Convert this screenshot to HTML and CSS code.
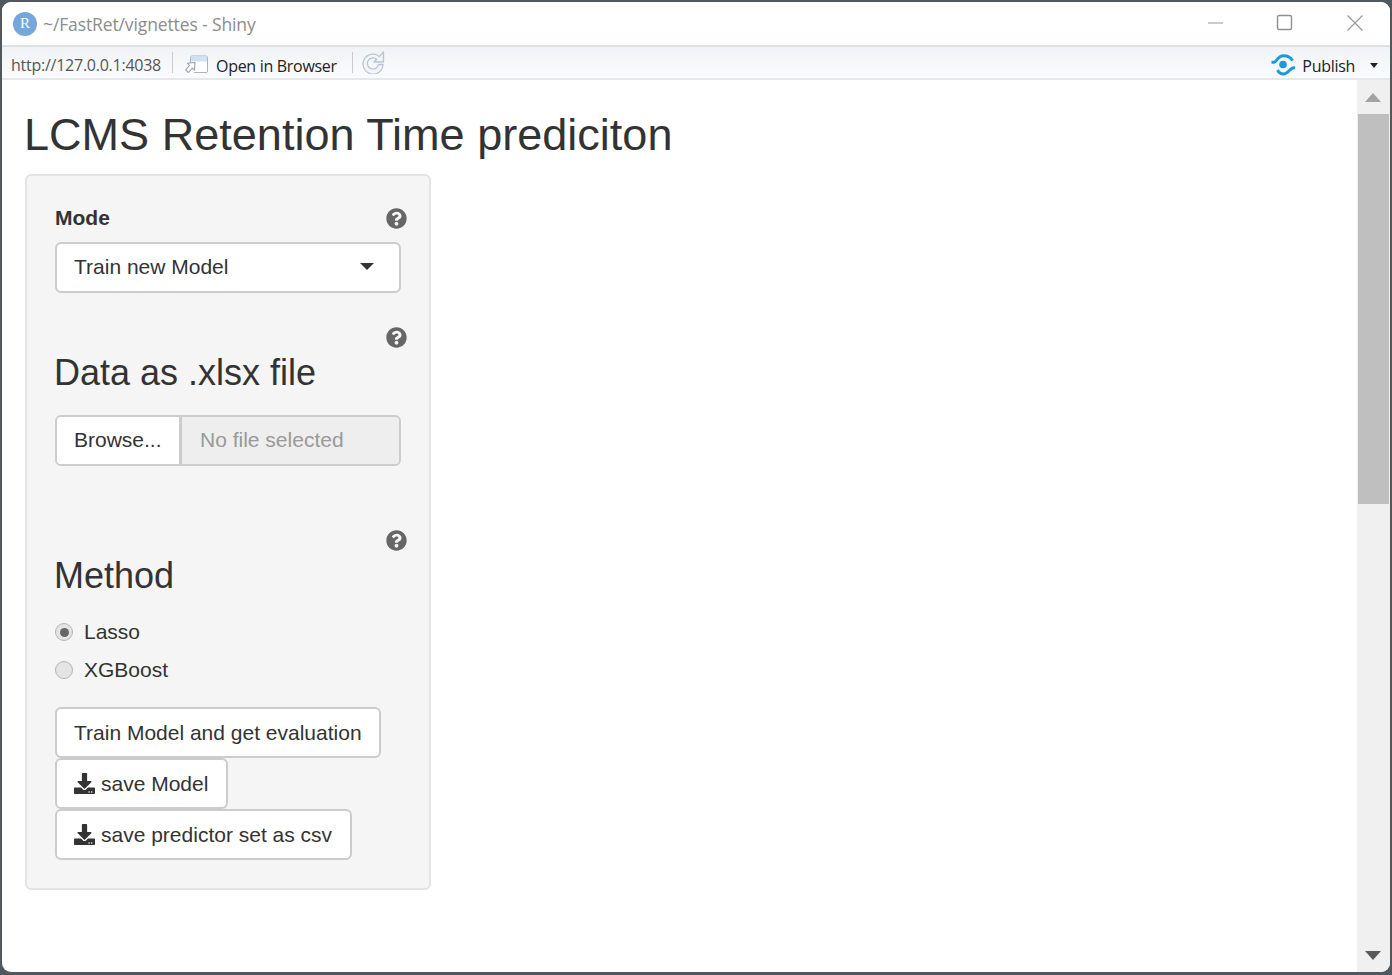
FILE: index.html
```html
<!DOCTYPE html>
<html lang="en">
<head>
<meta charset="utf-8">
<title>~/FastRet/vignettes - Shiny</title>
<link rel="stylesheet" href="styles.css">
</head>
<body>
<svg class="defs" width="0" height="0" aria-hidden="true">
  <symbol id="q" viewBox="0 0 512 512"><path d="M504 256c0 136.997-111.043 248-248 248S8 392.997 8 256C8 119.083 119.043 8 256 8s248 111.083 248 248zM262.655 90c-54.497 0-89.255 22.957-116.549 63.758-3.536 5.286-2.353 12.415 2.715 16.258l34.699 26.31c5.205 3.947 12.621 3.008 16.665-2.122 17.864-22.658 30.113-35.797 57.303-35.797 20.429 0 45.698 13.148 45.698 32.958 0 14.976-12.363 22.667-32.534 33.976C247.128 238.528 216 254.941 216 296v4c0 6.627 5.373 12 12 12h56c6.627 0 12-5.373 12-12v-1.333c0-28.462 83.186-29.647 83.186-106.667 0-58.002-60.165-102-116.531-102zM256 338c-25.365 0-46 20.635-46 46 0 25.364 20.635 46 46 46s46-20.636 46-46c0-25.365-20.635-46-46-46z"/></symbol>
  <symbol id="dl" viewBox="0 0 512 512"><path d="M216 0h80c13.3 0 24 10.7 24 24v168h87.7c17.8 0 26.7 21.5 14.1 34.1L269.7 378.3c-7.5 7.5-19.8 7.5-27.3 0L90.1 226.1c-12.6-12.6-3.7-34.1 14.1-34.1H192V24c0-13.3 10.7-24 24-24zm296 376v112c0 13.3-10.7 24-24 24H24c-13.3 0-24-10.7-24-24V376c0-13.3 10.7-24 24-24h146.7l49 49c20.1 20.1 52.5 20.1 72.6 0l49-49H488c13.3 0 24 10.7 24 24zm-124 88c0-11-9-20-20-20s-20 9-20 20 9 20 20 20 20-9 20-20zm64 0c0-11-9-20-20-20s-20 9-20 20 9 20 20 20 20-9 20-20z"/></symbol>
</svg>
<div class="window">
  <header class="titlebar">
    <span class="r-logo">R</span>
    <span class="win-title">~/FastRet/vignettes - Shiny</span>
    <div class="win-controls">
      <svg class="ctl" width="18" height="18" viewBox="0 0 18 18"><path d="M1 9h15" stroke="#9a9a9a" stroke-width="1.200" fill="none"/></svg>
      <svg class="ctl" width="18" height="18" viewBox="0 0 18 18"><rect x="1.500" y="1.500" width="14" height="14" rx="1.500" stroke="#8f8f8f" stroke-width="1.400" fill="none"/></svg>
      <svg class="ctl" width="18" height="18" viewBox="0 0 18 18"><path d="M1.500 1.500l15 15M16.500 1.500l-15 15" stroke="#9a9a9a" stroke-width="1.200" fill="none"/></svg>
    </div>
  </header>
  <nav class="toolbar">
    <span class="url">http://127.0.0.1:4038</span>
    <span class="sep"></span>
    <svg class="open-icon" width="24" height="20" viewBox="0 0 24 20">
      <path d="M5.500 9V3.500A1.500 1.500 0 0 1 7 2h14a1.500 1.500 0 0 1 1.500 1.500v13.500a1.500 1.500 0 0 1-1.500 1.500H9" fill="#fff" stroke="#a9b4bf"/>
      <path d="M6 2.500h16v5H6z" fill="#cfe2f5"/>
      <path d="M10 8.500l-7.500.8 2 2.200L.7 15.800l2.700 2.700 4-4.300 2 2z" fill="#fff" stroke="#98a2ad" stroke-width="1.100" stroke-linejoin="round"/>
    </svg>
    <span class="tool-text">Open in Browser</span>
    <span class="sep sep-b"></span>
    <svg class="reload" width="24" height="24" viewBox="0 0 24 24">
      <path d="M18.500 6.500A10 10 0 1 0 22 14.500h-4.500a5.600 5.600 0 1 1-1.800-5.300l-2.700 2.800H22.500V2z" fill="#f0f5fa" stroke="#bcc5cd" stroke-width="1.300" stroke-linejoin="round"/>
    </svg>
    <div class="publish">
      <svg class="pub-icon" width="34" height="28" viewBox="0 0 34 28">
        <circle cx="16" cy="15.500" r="3.800" fill="#1a9be0"/>
        <path d="M4.500 13.300h2.500C9.500 13.300 10.500 6.700 16.500 6.700c4 0 7.500 2 9 5" stroke="#1a9be0" stroke-width="3" fill="none"/>
        <path d="M10.500 21c1.500 3 3.500 4 6 4 4.500 0 6.500-6.300 10.500-6.300h1" stroke="#1a9be0" stroke-width="3" fill="none"/>
      </svg>
      <span class="tool-text">Publish</span>
      <span class="pub-caret"></span>
    </div>
  </nav>
  <div class="viewport">
    <main class="content">
      <h2 class="app-title">LCMS Retention Time prediciton</h2>
      <form class="well">
        <div class="label-row">
          <label class="bold-label">Mode</label>
          <svg class="help"><use href="#q"/></svg>
        </div>
        <div class="select">
          <span>Train new Model</span>
          <span class="caret"></span>
        </div>
        <div class="help-row help-row-data"><svg class="help"><use href="#q"/></svg></div>
        <h3 class="section">Data as .xlsx file</h3>
        <div class="file-input">
          <span class="browse">Browse...</span>
          <span class="file-name">No file selected</span>
        </div>
        <div class="help-row help-row-method"><svg class="help"><use href="#q"/></svg></div>
        <h3 class="section">Method</h3>
        <div class="radios">
          <div class="radio-row"><span class="radio checked"></span><span>Lasso</span></div>
          <div class="radio-row"><span class="radio"></span><span>XGBoost</span></div>
        </div>
        <div class="actions">
          <button type="button" class="btn">Train Model and get evaluation</button>
          <button type="button" class="btn btn-icon"><svg class="dl"><use href="#dl"/></svg>save Model</button>
          <button type="button" class="btn btn-icon"><svg class="dl"><use href="#dl"/></svg>save predictor set as csv</button>
        </div>
      </form>
    </main>
    <aside class="scrollbar">
      <span class="arrow-up"></span>
      <span class="thumb"></span>
      <span class="arrow-down"></span>
    </aside>
  </div>
</div>
</body>
</html>
```
FILE: styles.css
```css
* { box-sizing: border-box; }
html, body { height: 100%; }
body {
  margin: 0;
  padding: 2px 2px 3px;
  background: #50585e;
  overflow: hidden;
  font-family: "Liberation Sans", Arial, sans-serif;
  color: #333;
}
.defs { position: absolute; }
.window {
  height: 100%;
  display: flex;
  flex-direction: column;
  background: #fff;
  border-radius: 9px;
  overflow: hidden;
}
.titlebar {
  height: 43px;
  flex: none;
  display: flex;
  align-items: center;
  padding-left: 11px;
  background: #fff;
}
.r-logo {
  width: 24px;
  height: 24px;
  border-radius: 50%;
  background: #75a7da;
  color: #fff;
  font: 15px/22px "Liberation Serif", serif;
  text-align: center;
  margin-right: 6px;
}
.win-title {
  font: 17.500px "Open Sans", sans-serif;
  color: #8c8c8c;
  letter-spacing: -0.12px;
}
.win-controls {
  margin-left: auto;
  display: flex;
  gap: 51.500px;
  padding-right: 26.500px;
  position: relative;
  top: -1px;
}
.toolbar {
  height: 35px;
  flex: none;
  display: flex;
  align-items: center;
  padding: 0 10px 0 9px;
  border-top: 2px solid #dfe2e4;
  border-bottom: 2px solid #e4e8ea;
  background: linear-gradient(#f0f3f5, #fafbfc);
  font: 16px "Open Sans", sans-serif;
}
.url { color: #555; letter-spacing: -0.25px; position: relative; top: 2px; }
.sep {
  width: 1px;
  height: 21px;
  background: #c5cbd0;
  margin: 0 12px 0 11px;
}
.sep-b { margin: 0 8px 0 15px; }
.open-icon { margin-right: 7px; position: relative; top: 1px; }
.tool-text { color: #222; letter-spacing: -0.3px; position: relative; top: 3px; }
.reload { position: relative; top: -1px; }
.publish {
  margin-left: auto;
  display: flex;
  align-items: center;
}
.pub-icon { margin-right: 1px; }
.pub-caret {
  width: 0;
  height: 0;
  margin: 6px 2px 0 15px;
  border: 4.500px solid transparent;
  border-top: 5px solid #222;
  border-bottom: 0;
}
.viewport {
  flex: 1;
  min-height: 0;
  display: flex;
}
.content {
  flex: 1;
  padding: 0 23px;
  min-width: 0;
}
.app-title {
  margin: 25px 0 10px -1px;
  font-size: 45.050px;
  font-weight: 500;
  line-height: 59px;
}
.well {
  width: 406px;
  height: 716px;
  padding: 28px 28px;
  background: #f5f5f5;
  border: 2px solid #e3e3e3;
  border-radius: 6px;
  font-size: 21px;
}
.label-row, .help-row {
  display: flex;
  justify-content: space-between;
  align-items: center;
  margin-right: -6px;
}
.label-row { height: 28px; margin-bottom: 10px; }
.help-row { justify-content: flex-end; height: 22px; }
.help-row-data { margin-top: 33px; }
.help-row-method { margin-top: 63px; }
.bold-label { font-weight: 700; }
.help { width: 21px; height: 21px; fill: #666; }
.select {
  height: 51px;
  width: 346px;
  padding: 0 25px 2px 17px;
  display: flex;
  justify-content: space-between;
  align-items: center;
  background: #fff;
  border: 2px solid #ccc;
  border-radius: 6px;
}
.caret {
  width: 0;
  height: 0;
  border: 7.500px solid transparent;
  border-top: 7.500px solid #333;
  border-bottom: 0;
}
.section {
  margin: 5px 0 0 -1px;
  font-size: 36px;
  font-weight: 500;
  line-height: 40px;
}
.file-input {
  margin-top: 22px;
  width: 346px;
  height: 51px;
  display: flex;
  border: 2px solid #ccc;
  border-radius: 6px;
  overflow: hidden;
}
.browse {
  width: 125px;
  flex: none;
  padding-left: 17px;
  line-height: 45px;
  background: #fff;
  border-right: 3px solid #ccc;
}
.file-name {
  flex: 1;
  padding-left: 18px;
  line-height: 45px;
  background: #eee;
  color: #999;
}
.radios {
  margin-top: 22px;
  display: flex;
  flex-direction: column;
  gap: 10px;
}
.radio-row {
  height: 28px;
  display: flex;
  align-items: center;
  gap: 11px;
}
.radio {
  width: 18px;
  height: 18px;
  border-radius: 50%;
  background: #e4e4e4;
  border: 1px solid #b5b5b5;
  display: flex;
  align-items: center;
  justify-content: center;
}
.radio.checked::after {
  content: "";
  width: 9px;
  height: 9px;
  border-radius: 50%;
  background: #666;
}
.actions {
  margin-top: 23px;
  display: flex;
  flex-direction: column;
  align-items: flex-start;
  gap: 0;
}
.btn {
  height: 51px;
  padding: 0 17px;
  display: flex;
  align-items: center;
  gap: 6px;
  background: #fff;
  border: 2px solid #ccc;
  border-radius: 6px;
  font: inherit;
  color: #333;
}
.btn-icon { padding-right: 18px; }
.dl { width: 21px; height: 21px; fill: #333; }
.scrollbar {
  width: 33px;
  flex: none;
  display: flex;
  flex-direction: column;
  align-items: center;
  background: #f0f0f0;
}
.arrow-up, .arrow-down {
  width: 0;
  height: 0;
  margin-right: 1px;
  border-left: 8.500px solid transparent;
  border-right: 8.500px solid transparent;
}
.arrow-up { border-bottom: 9px solid #a3a3a3; margin-top: 13px; }
.thumb {
  width: 31px;
  height: 390px;
  margin-top: 12px;
  background: #bfbfbf;
}
.arrow-down { border-top: 9px solid #5a5a5a; margin-top: auto; margin-bottom: 12px; }
```
